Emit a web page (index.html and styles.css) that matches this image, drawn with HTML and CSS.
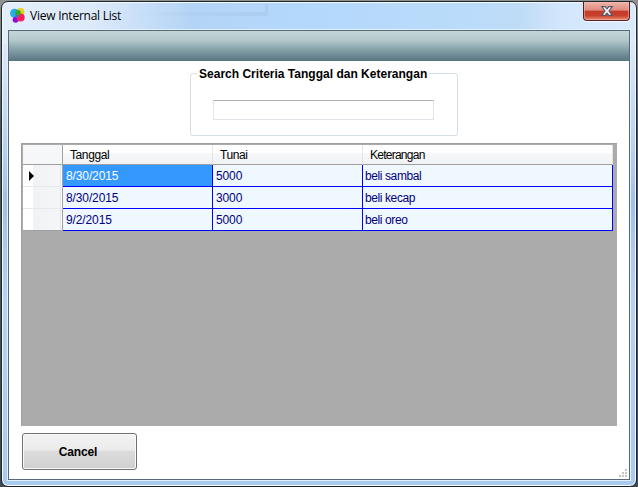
FILE: index.html
```html
<!DOCTYPE html>
<html lang="id">
<head>
<meta charset="utf-8">
<title>View Internal List</title>
<link rel="stylesheet" href="styles.css">
</head>
<body>
<div class="window">
  <header class="titlebar">
    <svg class="app-icon" width="15" height="15" viewBox="0 0 15 15">
      <circle cx="10.5" cy="4" r="3.9" fill="#e8d020"/>
      <circle cx="4.6" cy="5.3" r="4.5" fill="#22aeea"/>
      <circle cx="5.6" cy="11.8" r="3" fill="#8d10d8"/>
      <circle cx="10.7" cy="9.5" r="4" fill="#f4205f"/>
      <circle cx="8" cy="4.7" r="2.8" fill="#35a822"/>
      <circle cx="6.6" cy="8.2" r="1.5" fill="#5268d8"/>
    </svg>
    <h1 class="title">View Internal List</h1>
    <button class="close" aria-label="Close">
      <svg width="12" height="10" viewBox="0 0 12 10">
        <path d="M.7.6H4.2L6 2.8 7.8.6h3.5L8 5l3.3 4.4H7.8L6 7.2 4.2 9.4H.7L4 5z" fill="#f4f4f6" stroke="#555564" stroke-width="1.1"/>
      </svg>
    </button>
  </header>
  <main class="client">
    <div class="band"></div>
    <fieldset class="search">
      <legend><span class="legend-text">Search Criteria Tanggal dan Keterangan</span></legend>
      <input class="search-input" type="text">
    </fieldset>
    <div class="grid-view">
      <div class="row head">
        <span class="corner"></span><span class="h-tanggal">Tanggal</span><span>Tunai</span><span class="h-ket">Keterangan</span>
      </div>
      <div class="row">
        <span class="selector"><i class="pointer"></i></span><span class="selected">8/30/2015</span><span>5000</span><span class="note">beli sambal</span>
      </div>
      <div class="row">
        <span class="selector"></span><span>8/30/2015</span><span>3000</span><span class="note">beli kecap</span>
      </div>
      <div class="row">
        <span class="selector"></span><span>9/2/2015</span><span>5000</span><span class="note">beli oreo</span>
      </div>
    </div>
    <footer class="footer">
      <button class="cancel">Cancel</button>
      <svg class="grip" width="9" height="9" viewBox="0 0 9 9">
        <path d="M6 0h2v2H6zM3 3h2v2H3zM6 3h2v2H6zM0 6h2v2H0zM3 6h2v2H3zM6 6h2v2H6z" fill="#c4c4c4"/>
      </svg>
    </footer>
  </main>
</div>
</body>
</html>
```
FILE: styles.css
```css
* { box-sizing: border-box; }
body {
  margin: 0;
  width: 638px;
  height: 487px;
  overflow: hidden;
  padding: 1px 1px 0;
  background: linear-gradient(#8e9290, #777d80 60px, #4d565e 130px, #414b55);
  font-family: "Liberation Sans", Arial, sans-serif;
}
.window {
  width: 636px;
  height: 486px;
  border: 1px solid #20262e;
  border-radius: 7px;
  box-shadow: inset 0 0 0 1px #f4faff;
  padding: 0 6px 6px;
  background:
    linear-gradient(90deg, #8fa5c000, #8fa5c030) 120px 10px / 146px 4px no-repeat,
    linear-gradient(#8fa5c030, #8fa5c030) 263px 2px / 3px 8px no-repeat,
    linear-gradient(90deg, #e2eefa 0, #dceafa 90px, #b4d4f6 190px, #b3d8fc 300px, #bbdcfa 480px, #c0dcf6 520px, #d3e7fc 560px, #d9eafc) top / 100% 42px no-repeat,
    linear-gradient(#dce9f8 40px, #b3d1f3 150px, #a0c1e8 200px, #b4d3f4 300px, #a9cbf0);
}
.titlebar {
  height: 28px;
  display: flex;
  align-items: flex-start;
}
.app-icon { margin: 6px 0 0 2px; flex: none; }
.title {
  margin: 6px 0 0 5px;
  font: 12px/16px "Open Sans", sans-serif;
  letter-spacing: -0.24px;
  color: #000;
  white-space: nowrap;
}
.close {
  width: 47px;
  height: 19px;
  margin: 0 0 0 auto;
  padding: 0 0 0 1px;
  display: flex;
  align-items: center;
  justify-content: center;
  border: 1px solid #561f21;
  border-top: 0;
  border-radius: 0 0 4px 4px;
  background: linear-gradient(#f0b3a8, #df8a7d 46%, #c33b28 50%, #c9402c 75%, #e78c70);
  box-shadow: inset 0 0 0 1px #f5c4b980, 0 1px 0 #f4faff;
}
.client {
  width: 622px;
  height: 450px;
  background: #fff;
  border: 1px solid #58697a;
  box-shadow: 0 0 0 1px #e4f0fc;
  display: flex;
  flex-direction: column;
}
.band {
  height: 30px;
  flex: none;
  background: linear-gradient(#c3d6d8, #b4c9cb 30%, #829da6 65%, #587580);
}
.search {
  width: 268px;
  height: 70px;
  margin: 5px 0 0 181px;
  padding: 0 0 0 22px;
  border: 1px solid #d5dfe5;
  border-radius: 3px;
  flex: none;
  min-width: 0;
}
.search legend {
  height: 15px;
  width: 232px;
  margin-left: -16px;
  padding: 0 0 0 2px;
  white-space: nowrap;
}
.legend-text {
  display: block;
  font: bold 12px/17px "Liberation Sans", Arial, sans-serif;
  letter-spacing: 0.01px;
}
.search-input {
  display: block;
  width: 221px;
  height: 20px;
  margin-top: 19px;
  border: 1px solid #e2e3ea;
  border-top-color: #abadb3;
  border-radius: 1px;
  background: #fff;
  outline: 0;
}
.grid-view {
  width: 596px;
  height: 283px;
  margin: 7px 0 0 12px;
  flex: none;
  padding: 1px 0 0 1px;
  background: #ababab;
  border-top: 1px solid #a0a0a0;
  border-left: 1px solid #a0a0a0;
}
.row {
  width: 590px;
  height: 22px;
  display: grid;
  grid-template-columns: 40px 150px 150px 250px;
  grid-template-rows: 100%;
  font-size: 12px;
  line-height: 22px;
  color: #000080;
}
.row > span {
  padding-left: 3px;
  background: #f0f8ff;
  border-right: 1px solid #00f;
  border-bottom: 1px solid #00f;
  white-space: nowrap;
  letter-spacing: -0.12px;
}
.row > .selected { background: #39f; color: #fff; }
.row > .note { padding-left: 2px; letter-spacing: -0.4px; }
.row > .selector {
  padding: 6px 0 0 6px;
  border-right-color: #a0a0a0;
  border-bottom-color: #e6e8ea;
  background: linear-gradient(90deg, #fff 10px, #f1f2f4 10px, #f5f6f8 37px, #e3e5e8 37px, #e3e5e8 38px, #fff 38px);
}
.row:last-child > .selector { border-bottom-color: #a0a0a0; }
.pointer {
  display: block;
  width: 0;
  height: 0;
  border: solid transparent;
  border-width: 5px 0 5px 5px;
  border-left-color: #000;
}
.row.head {
  height: 20px;
  line-height: 20px;
  color: #000;
}
.row.head > span {
  padding-left: 7px;
  border-right-color: #e3e4e6;
  border-bottom-color: #a0a0a0;
  background: linear-gradient(#fff 8px, #f7f8fa 8px, #f1f2f4);
  letter-spacing: -0.4px;
}
.row.head > .h-ket { letter-spacing: -0.75px; }
.row.head > .corner { border-right-color: #a0a0a0; background: #f5f7f9; }
.footer {
  flex: 1;
  display: flex;
  justify-content: space-between;
  align-items: flex-start;
  padding: 7px 0 0 13px;
}
.cancel {
  width: 115px;
  height: 37px;
  padding: 0 3px 0 0;
  border: 1px solid #707070;
  border-radius: 3px;
  background: linear-gradient(#f2f2f2, #ebebeb 46%, #dcdcdc 49%, #cfcfcf);
  box-shadow: inset 0 0 0 1px #fafafa;
  font: bold 12px "Liberation Sans", Arial, sans-serif;
  letter-spacing: -0.15px;
  color: #000;
}
.grip { margin: 0 1px 1px 0; align-self: flex-end; }
```
